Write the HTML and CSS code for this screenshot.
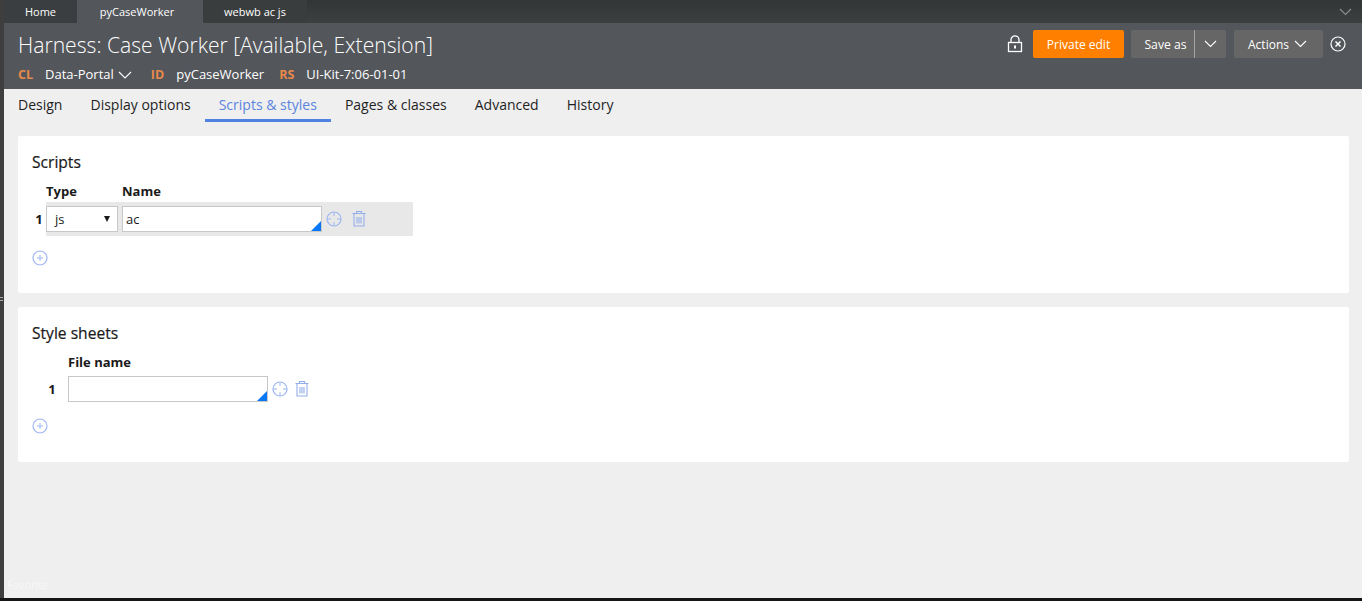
FILE: index.html
```html
<!DOCTYPE html>
<html lang="en">
<head>
<meta charset="utf-8">
<title>Harness: Case Worker</title>
<link rel="stylesheet" href="styles.css">
</head>
<body>
<div class="app">
  <div class="rail"><span class="grip"></span></div>
  <div class="main">
    <nav class="doc-tabs">
      <a class="doc-tab doc-home">Home</a>
      <a class="doc-tab doc-active">pyCaseWorker</a>
      <a class="doc-tab doc-third">webwb ac js</a>
      <svg class="doc-more" width="13" height="8" viewBox="0 0 13 8"><path d="M1 1l5.5 5.5L12 1" fill="none" stroke="#8b8e90" stroke-width="1.2"/></svg>
    </nav>
    <header class="head">
      <div class="head-left">
        <h1 class="title">Harness: Case Worker [Available, Extension]</h1>
        <div class="meta">
          <b class="key">CL</b><span class="val val-cl">Data-Portal</span>
          <svg class="chev chev-cl" width="14" height="8" viewBox="0 0 14 8"><path d="M1 1l6 6 6-6" fill="none" stroke="#fff" stroke-width="1.1"/></svg>
          <b class="key key-id">ID</b><span class="val val-id">pyCaseWorker</span>
          <b class="key key-rs">RS</b><span class="val">UI-Kit-7:06-01-01</span>
        </div>
      </div>
      <div class="head-actions">
        <svg class="lock" width="16" height="18" viewBox="0 0 16 18"><rect x="1.5" y="7.5" width="13" height="9" fill="none" stroke="#fff" stroke-width="1.3"/><path d="M4 7.5V4.8a4 4 0 0 1 8 0v2.7" fill="none" stroke="#fff" stroke-width="1.3"/><rect x="7" y="10.5" width="2" height="3" fill="#fff"/></svg>
        <button class="btn btn-primary">Private edit</button>
        <div class="btn btn-split">
          <span class="split-label">Save as</span>
          <span class="split-arrow"><svg width="13" height="8" viewBox="0 0 13 8"><path d="M1 1l5.5 5.5L12 1" fill="none" stroke="#fff" stroke-width="1.1"/></svg></span>
        </div>
        <button class="btn btn-actions">Actions<svg width="13" height="8" viewBox="0 0 13 8"><path d="M1 1l5.5 5.5L12 1" fill="none" stroke="#fff" stroke-width="1.1"/></svg></button>
        <svg class="close" width="16" height="16" viewBox="0 0 16 16"><circle cx="8" cy="8" r="7" fill="none" stroke="#fff" stroke-width="1.2"/><path d="M5.5 5.5l5 5m0-5l-5 5" stroke="#fff" stroke-width="1.5"/></svg>
      </div>
    </header>
    <nav class="tabs">
      <a class="tab">Design</a>
      <a class="tab">Display options</a>
      <a class="tab tab-active">Scripts &amp; styles</a>
      <a class="tab">Pages &amp; classes</a>
      <a class="tab">Advanced</a>
      <a class="tab">History</a>
    </nav>
    <main class="content">
      <section class="card card-scripts">
        <h2 class="card-title">Scripts</h2>
        <div class="grid-head grid-head-scripts"><span class="col-type">Type</span><span>Name</span></div>
        <div class="row row-scripts">
          <span class="num">1</span>
          <div class="select"><span>js</span><i class="caret"></i></div>
          <div class="input input-name"><span>ac</span><i class="corner"></i></div>
          <svg class="target" width="16" height="16" viewBox="0 0 16 16"><circle cx="8" cy="8" r="7" fill="none" stroke="#9db8f2" stroke-width="1.2"/><path d="M8 1v4M8 11v4M1 8h4M11 8h4" stroke="#9db8f2" stroke-width="1"/></svg>
          <svg class="trash" width="14" height="17" viewBox="0 0 14 17"><path d="M.5 3.5h13M4.5 3.5v-2h5v2M2 3.5V16h10V3.5M5 7v6.5M7 7v6.5M9 7v6.5" fill="none" stroke="#94aeea" stroke-width="1.1"/></svg>
        </div>
        <svg class="add" width="16" height="16" viewBox="0 0 16 16"><circle cx="8" cy="8" r="7" fill="none" stroke="#9db8f2" stroke-width="1.2"/><path d="M8 5v6M5 8h6" stroke="#9db8f2" stroke-width="1"/></svg>
      </section>
      <section class="card card-styles">
        <h2 class="card-title">Style sheets</h2>
        <div class="grid-head grid-head-styles"><span>File name</span></div>
        <div class="row row-styles">
          <span class="num num-styles">1</span>
          <div class="input input-file"><i class="corner"></i></div>
          <svg class="target" width="16" height="16" viewBox="0 0 16 16"><circle cx="8" cy="8" r="7" fill="none" stroke="#9db8f2" stroke-width="1.2"/><path d="M8 1v4M8 11v4M1 8h4M11 8h4" stroke="#9db8f2" stroke-width="1"/></svg>
          <svg class="trash" width="14" height="17" viewBox="0 0 14 17"><path d="M.5 3.5h13M4.5 3.5v-2h5v2M2 3.5V16h10V3.5M5 7v6.5M7 7v6.5M9 7v6.5" fill="none" stroke="#94aeea" stroke-width="1.1"/></svg>
        </div>
        <svg class="add" width="16" height="16" viewBox="0 0 16 16"><circle cx="8" cy="8" r="7" fill="none" stroke="#9db8f2" stroke-width="1.2"/><path d="M8 5v6M5 8h6" stroke="#9db8f2" stroke-width="1"/></svg>
      </section>
      <div class="spacer"></div>
      <div class="favorite">Favorite</div>
    </main>
  </div>
</div>
<div class="bottom"></div>
</body>
</html>
```
FILE: styles.css
```css
* { box-sizing: border-box; }
html, body { margin: 0; height: 100%; overflow: hidden; }
body {
  display: flex;
  flex-direction: column;
  font-family: "Open Sans", "Noto Sans", sans-serif;
  color: #1a1a1a;
  background: #efefef;
}
svg { display: block; flex: none; }
.app { flex: 1; display: flex; min-height: 0; }
.rail { width: 4px; background: #3e3e3e; position: relative; }
.grip { position: absolute; left: 0; top: 297px; width: 3px; height: 4px; border-top: 1px solid #aaa; border-bottom: 1px solid #aaa; }
.bottom { height: 3px; background: #151515; }
.main { flex: 1; display: flex; flex-direction: column; min-width: 0; }

.doc-tabs {
  height: 23px;
  display: flex;
  align-items: stretch;
  background: linear-gradient(#333637, #3d4041);
  font-size: 11px;
  color: #fff;
}
.doc-tab { display: flex; align-items: center; justify-content: center; padding-bottom: 1px; }
.doc-home { width: 73px; background: #3a3e40; }
.doc-active { width: 126px; background: #53565b; padding-right: 6px; }
.doc-third { width: 104px; background: #3a3d3e; }
.doc-more { margin: 8px 10px 0 auto; }

.head {
  height: 66px;
  display: flex;
  justify-content: space-between;
  padding: 0 16px 0 14px;
  background: #53565b;
  color: #fff;
}
.title { margin: 8px 0 0; font-size: 21.15px; line-height: 28px; font-weight: 300; }
.meta { display: flex; align-items: center; margin-top: 5px; height: 20px; font-size: 13px; }
.key { color: #e8894a; font-weight: 700; font-size: 12.5px; }
.val-cl { margin-left: 12px; }
.chev-cl { margin: 2px 0 0 4px; }
.key-id { margin-left: 19px; }
.val-id { margin-left: 12px; }
.key-rs { margin-left: 15px; }
.key-rs + .val { margin-left: 12px; }

.head-actions { display: flex; align-items: flex-start; padding-top: 7px; }
.btn {
  height: 28px;
  border: 0;
  border-radius: 2px;
  font: inherit;
  font-size: 12px;
  color: #fff;
  display: flex;
  align-items: center;
  justify-content: center;
  padding: 0;
}
.lock { margin: 5px 10px 0 0; }
.btn-primary { width: 91px; background: #ff8000; }
.btn-split { width: 95px; margin-left: 7px; background: #666666; }
.split-label { flex: 1; text-align: center; padding-left: 6px; font-size: 12.2px; }
.split-arrow { width: 32px; height: 100%; border-left: 1px solid #a3a3a3; display: flex; align-items: center; justify-content: center; }
.btn-actions { width: 89px; margin-left: 8px; background: #666666; gap: 5px; padding-right: 2px; }
.close { margin: 6px 0 0 7px; }

.tabs { height: 33px; display: flex; font-size: 14.03px; color: #1f1f1f; }
.tab { padding: 6px 14px 0; height: 33px; line-height: 20px; }
.tab-active { color: #5b84e0; border-bottom: 3px solid #4f81e0; }

.content { flex: 1; display: flex; flex-direction: column; padding: 14px 13px 0 14px; min-height: 0; }
.card { background: #fff; border-radius: 2px; padding: 0 14px; }
.card-scripts { height: 157px; }
.card-styles { height: 155px; margin-top: 14px; }
.card-title { margin: 0; padding-top: 16px; font-size: 15.6px; line-height: 20px; font-weight: 400; -webkit-text-stroke: .2px #1a1a1a; }
.grid-head { display: flex; font-size: 13px; font-weight: 700; line-height: 18px; margin-top: 10px; }
.grid-head-scripts { padding-left: 14px; }
.col-type { width: 76px; }
.grid-head-styles { padding-left: 36px; }

.row { display: flex; align-items: center; font-size: 13px; }
.row-scripts { width: 367px; height: 34px; margin: 2px 0 0 14px; background: #e8e8e8; position: relative; }
.row-styles { height: 26px; margin-top: 5px; }
.num { width: 10px; font-weight: 700; text-align: center; flex: none; }
.num-styles { margin: 0 11px 0 15px; }
.row-scripts .num { position: relative; margin: 0 2px 0 -12px; }
.select {
  width: 72px; height: 26px;
  background: #fff; border: 1px solid #c8c8c8;
  display: flex; align-items: center; justify-content: space-between;
  padding: 0 7px 0 8px;
}
.caret { width: 0; height: 0; border-left: 3px solid transparent; border-right: 3px solid transparent; border-top: 6px solid #1a1a1a; margin-top: -1px; }
.input { height: 26px; background: #fff; border: 1px solid #c8c8c8; position: relative; display: flex; align-items: center; padding-left: 3px; }
.input-name { width: 200px; margin-left: 4px; }
.input-file { width: 200px; }
.corner { position: absolute; right: 0; bottom: 0; width: 0; height: 0; border-left: 10px solid transparent; border-bottom: 10px solid #0a78f5; }
.target { margin-left: 4px; }
.trash { margin-left: 10px; margin-top: -2px; }
.row-styles .trash { margin-left: 7px; }
.add { margin-top: 14px; }
.card-styles .add { margin-top: 16px; }
.spacer { flex: 1; }
.favorite { font-size: 11px; color: #f7f7f7; margin: 0 0 6px -11px; }
```
